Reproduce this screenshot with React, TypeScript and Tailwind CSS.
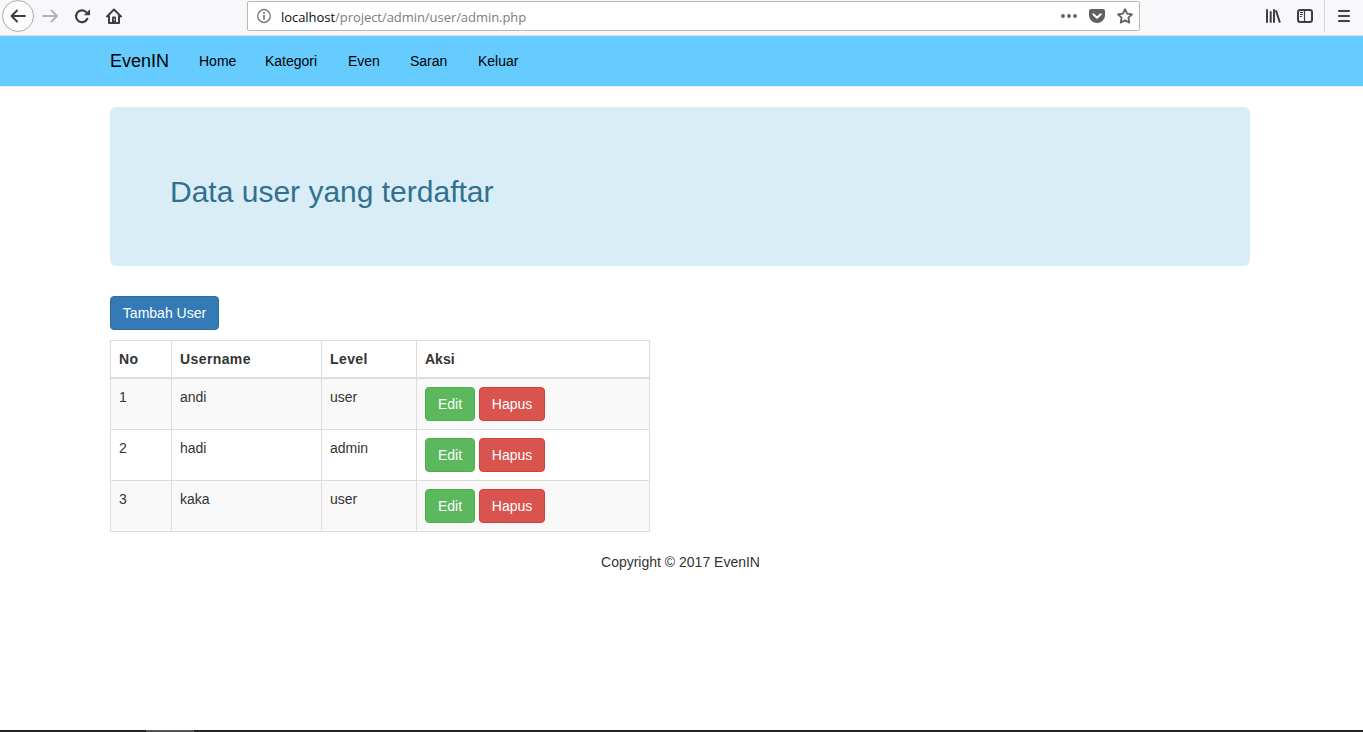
import React from "react";

const rows = [
  { no: 1, username: "andi", level: "user" },
  { no: 2, username: "hadi", level: "admin" },
  { no: 3, username: "kaka", level: "user" },
];

const links = [
  { label: "Home", width: "w-[66px]" },
  { label: "Kategori", width: "w-[83px]" },
  { label: "Even", width: "w-[62px]" },
  { label: "Saran", width: "w-[68px]" },
  { label: "Keluar", width: "w-[72px]" },
];

function BrowserBar() {
  return (
    <div className="flex h-9 shrink-0 items-start border-b border-[#d6e2ec] bg-[#f8f8fa]">
      <div className="ml-0.5 flex h-8 w-8 shrink-0 items-center justify-center rounded-full border border-[#adadb0] bg-[#fdfdfd]">
        <svg width="16" height="16" viewBox="0 0 16 16" fill="none" stroke="#3f3f42" strokeWidth="2" strokeLinecap="round" strokeLinejoin="round">
          <path d="M15 8H1.500M7 2.500L1.500 8l5.500 5.500" />
        </svg>
      </div>
      <svg className="ml-2 mt-2 shrink-0" width="16" height="16" viewBox="0 0 16 16" fill="none" stroke="#b2b2b4" strokeWidth="1.800" strokeLinecap="round" strokeLinejoin="round">
        <path d="M1 8h14M9.500 2.500L15 8l-5.500 5.500" />
      </svg>
      <svg className="ml-4 mt-2 shrink-0" width="16" height="16" viewBox="0 0 16 16">
        <path d="M13.300 10.800A5.900 5.900 0 1 1 12 4" fill="none" stroke="#3f3f42" strokeWidth="2.200" strokeLinecap="round" />
        <path d="M16 1.200v5.600a.5.5 0 0 1-.5.5H9.800z" fill="#3f3f42" />
      </svg>
      <svg className="ml-4 mt-2 shrink-0" width="16" height="16" viewBox="0 0 16 16">
        <path d="M1 8.500L8 1.500l7 7M3 8V15h10V8" fill="none" stroke="#3f3f42" strokeWidth="2" strokeLinecap="round" strokeLinejoin="round" />
        <path d="M6 15V9.500a1 1 0 0 1 1-1h2a1 1 0 0 1 1 1V15z" fill="#3f3f42" />
        <path d="M8.300 10.800v1.700" stroke="#f8f8fa" strokeWidth="1" />
      </svg>
      <div className="ml-[125px] mt-px flex h-[30px] w-[893px] shrink-0 items-center rounded-[2px] border border-[#b9b9bc] bg-white pl-[9px] pr-1.5">
        <svg width="14" height="14" viewBox="0 0 14 14" fill="none">
          <circle cx="7" cy="7" r="6.300" stroke="#6b6b6e" strokeWidth="1.200" />
          <path d="M7 6v4.500" stroke="#6b6b6e" strokeWidth="1.600" />
          <circle cx="7" cy="3.900" r="1" fill="#6b6b6e" />
        </svg>
        <div className="ml-2.5 mt-px font-['Open_Sans','Noto_Sans',sans-serif] text-[13px] leading-5 tracking-[-0.05px] text-[#7d7d7d]">
          <span className="text-[#0c0c0d]">localhost</span>/project/admin/user/admin.php
        </div>
        <svg className="ml-auto" width="16" height="16" viewBox="0 0 16 16" fill="#606063">
          <circle cx="2" cy="8" r="1.900" />
          <circle cx="8" cy="8" r="1.900" />
          <circle cx="14" cy="8" r="1.900" />
        </svg>
        <svg className="ml-3" width="16" height="16" viewBox="0 0 16 16">
          <path d="M2 1h12a2 2 0 0 1 2 2v4.500a8 7.500 0 0 1-16 0V3a2 2 0 0 1 2-2z" fill="#606063" />
          <path d="M4.300 6.200L8 9.700l3.700-3.500" fill="none" stroke="#fff" strokeWidth="2" strokeLinecap="round" strokeLinejoin="round" />
        </svg>
        <svg className="ml-3" width="16" height="16" viewBox="0 0 16 16" fill="none" stroke="#606063" strokeWidth="1.800" strokeLinejoin="round">
          <path d="M8 1.200l2.100 4.500 4.900.6-3.600 3.400.9 4.900L8 12.200l-4.300 2.400.9-4.900L1 6.300l4.900-.6z" />
        </svg>
      </div>
      <svg className="ml-[125px] mt-2 shrink-0" width="16" height="16" viewBox="0 0 16 16" fill="none" stroke="#3f3f42" strokeWidth="2">
        <path d="M2 1.200v13.600M5.700 3.200v11.600M9 1.200v13.600" />
        <path d="M10.900 2.200l4 12.400" />
      </svg>
      <svg className="ml-4 mt-2 shrink-0" width="16" height="16" viewBox="0 0 16 16" fill="none" stroke="#3f3f42">
        <rect x="1" y="2" width="14" height="12" rx="2.200" strokeWidth="2" />
        <path d="M7.500 2v12" strokeWidth="1.200" />
        <path d="M3 4.500h3M3 6.500h3M3 8.500h2" strokeWidth="1" />
      </svg>
      <div className="ml-[11px] h-8 w-px bg-[#d7d7db]" />
      <svg className="ml-[11px] mt-2 shrink-0" width="16" height="16" viewBox="0 0 16 16" stroke="#3f3f42" strokeWidth="2" strokeLinecap="round">
        <path d="M3 3h10M3 8h10M3 13h10" />
      </svg>
    </div>
  );
}

const button = "h-[34px] rounded-[4px] border leading-5 text-white";

export default function App() {
  return (
    <div className="flex h-[732px] w-[1363px] flex-col overflow-hidden bg-white font-['Liberation_Sans',Arial,sans-serif] text-sm leading-5 text-[#333333]">
      <BrowserBar />
      <nav className="flex h-[51px] shrink-0 items-center border-b border-[#e4eef4] bg-[#66ccff] pl-[110px] text-black">
        <a className="w-[74px] text-[18px]">EvenIN</a>
        {links.map((link) => (
          <a key={link.label} className={`${link.width} whitespace-nowrap pl-[15px]`}>{link.label}</a>
        ))}
      </nav>
      <main className="ml-[110px] mt-5 flex w-[1140px] flex-col items-start">
        <header className="h-[159px] w-full rounded-[6px] bg-[#d9edf7] px-[60px] pt-[68px]">
          <h2 className="text-[30px] leading-[33px] text-[#31708f]">Data user yang terdaftar</h2>
        </header>
        <button className={`${button} mt-[30px] w-[109px] border-[#2e6da4] bg-[#337ab7]`}>Tambah User</button>
        <table className="mt-2.5 w-[540px] table-fixed border-separate border-spacing-0 border-l border-t border-[#dddddd] text-left">
          <colgroup>
            <col className="w-[61px]" />
            <col className="w-[150px]" />
            <col className="w-[95px]" />
            <col className="w-[233px]" />
          </colgroup>
          <thead>
            <tr className="tracking-[0.4px]">
              {["No", "Username", "Level", "Aksi"].map((name) => (
                <th key={name} className="border-b-2 border-r border-[#dddddd] p-2 font-bold last:tracking-normal">{name}</th>
              ))}
            </tr>
          </thead>
          <tbody>
            {rows.map((row) => (
              <tr key={row.no} className="align-top odd:bg-[#f9f9f9]">
                <td className="border-b border-r border-[#dddddd] p-2">{row.no}</td>
                <td className="border-b border-r border-[#dddddd] p-2">{row.username}</td>
                <td className="border-b border-r border-[#dddddd] p-2">{row.level}</td>
                <td className="border-b border-r border-[#dddddd] p-2">
                  <div className="flex gap-1">
                    <button className={`${button} w-[50px] border-[#4cae4c] bg-[#5cb85c]`}>Edit</button>
                    <button className={`${button} w-[66px] border-[#d43f3a] bg-[#d9534f]`}>Hapus</button>
                  </div>
                </td>
              </tr>
            ))}
          </tbody>
        </table>
        <footer className="mt-5 w-full pl-px text-center">Copyright © 2017 EvenIN</footer>
      </main>
      <div className="mt-auto flex h-0.5 bg-[#242427]">
        <div className="ml-[146px] w-12 bg-[#555557]" />
      </div>
    </div>
  );
}
